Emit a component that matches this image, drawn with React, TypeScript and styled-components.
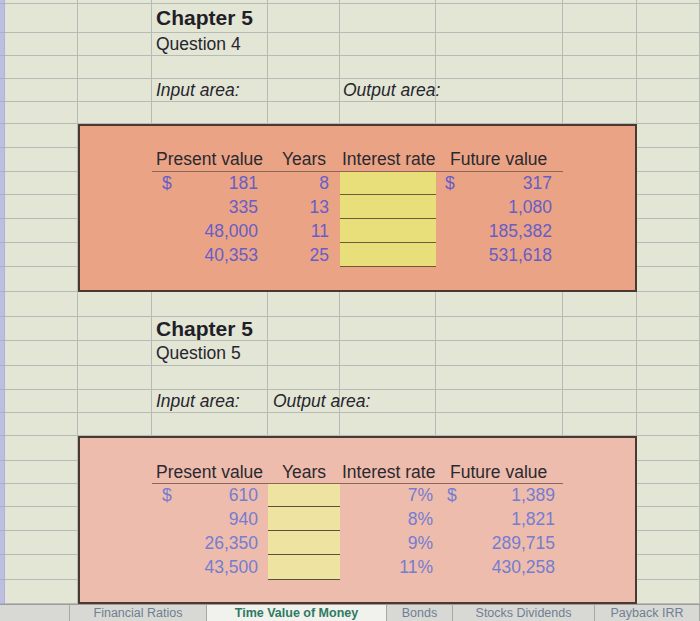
import React from "react";
import styled, { createGlobalStyle } from "styled-components";

const COLS = [5, 73, 74, 116, 72, 96, 127, 74, 63];
const ROWS = [4, 29, 23, 23, 23, 22, 24, 24, 23, 24, 24, 24, 25, 25, 24, 25, 24, 23, 23, 25, 23, 23, 24, 24, 25, 24];

const Global = createGlobalStyle`
  html, body { margin: 0; padding: 0; width: 700px; height: 621px; overflow: hidden; background: #e3e5d5; }
  body { font-family: "Liberation Sans", Arial, sans-serif; }
`;

const Page = styled.div`
  display: flex;
  flex-direction: column;
  width: 700px;
  height: 621px;
  overflow: hidden;
  background: #e3e5d5;
`;

const Sheet = styled.div`
  display: grid;
  grid-template-columns: ${COLS.map((c) => c + "px").join(" ")};
  grid-template-rows: ${ROWS.map((r) => r + "px").join(" ")};
  flex: none;
`;

const Cell = styled.div<{ $strip?: boolean }>`
  box-sizing: border-box;
  border-right: 1px solid ${(p) => (p.$strip ? "#b0b3d6" : "#b7bbb6")};
  border-bottom: 1px solid ${(p) => (p.$strip ? "#a9add2" : "#b7bbb6")};
  background: ${(p) => (p.$strip ? "#bcbfe0" : "transparent")};
  display: flex;
  align-items: center;
  white-space: nowrap;
  overflow: visible;
  min-width: 0;
  position: relative;
  z-index: 1;
`;

const Title = styled.span`
  font-weight: 700;
  font-size: 21px;
  color: #1f1f28;
  padding-left: 4px;
`;

const Label = styled.span<{ $italic?: boolean; $pad?: number }>`
  font-size: 17.5px;
  font-style: ${(p) => (p.$italic ? "italic" : "normal")};
  color: #26262e;
  padding-left: ${(p) => p.$pad ?? 4}px;
`;

const Box = styled.div<{ $row: number; $span: number; $tone: "a" | "b"; $rows: number[] }>`
  grid-column: 3 / 9;
  grid-row: ${(p) => p.$row} / span ${(p) => p.$span};
  box-sizing: border-box;
  border: 2px solid #4a3832;
  background: ${(p) => (p.$tone === "a" ? "#eba385" : "#eebcac")};
  display: grid;
  grid-template-columns: 72px 116px 72px 96px 127px 72px;
  grid-template-rows: ${(p) => p.$rows.map((r) => r + "px").join(" ")};
  font-size: 17.5px;
  position: relative;
  z-index: 2;
`;

const BoxCell = styled.div`
  box-sizing: border-box;
  min-width: 0;
`;

const HeadCell = styled.div<{ $pad?: number }>`
  box-sizing: border-box;
  border-bottom: 1px solid #8c6658;
  display: flex;
  align-items: center;
  white-space: nowrap;
  overflow: hidden;
  color: #2a2930;
  padding-left: ${(p) => p.$pad ?? 0}px;
  min-width: 0;
`;

const Acct = styled.div<{ $tone: "a" | "b"; $l: number; $r: number }>`
  box-sizing: border-box;
  display: flex;
  align-items: center;
  justify-content: space-between;
  padding: 0 ${(p) => p.$r}px 0 ${(p) => p.$l}px;
  color: ${(p) => (p.$tone === "a" ? "#665ec8" : "#747dd0")};
  white-space: nowrap;
`;

const Num = styled.div<{ $tone: "a" | "b"; $r: number }>`
  box-sizing: border-box;
  display: flex;
  align-items: center;
  justify-content: flex-end;
  padding-right: ${(p) => p.$r}px;
  color: ${(p) => (p.$tone === "a" ? "#665ec8" : "#747dd0")};
  white-space: nowrap;
`;

const InputCell = styled.div<{ $tone: "a" | "b" }>`
  box-sizing: border-box;
  background: ${(p) => (p.$tone === "a" ? "#e9df7a" : "#efe3a2")};
  border-bottom: 1px solid ${(p) => (p.$tone === "a" ? "#6e5a3a" : "#5a4e40")};
`;

const TabBar = styled.div`
  display: flex;
  align-items: stretch;
  flex: 1;
  background: #d8d9d5;
  border-top: 1px solid #9c9d99;
  font-family: "Liberation Sans", Arial, sans-serif;
  font-size: 12.5px;
  color: #6f8092;
`;

const Tab = styled.div<{ $active?: boolean; $w: number }>`
  box-sizing: border-box;
  width: ${(p) => p.$w}px;
  flex: none;
  display: flex;
  justify-content: center;
  align-items: center;
  line-height: 15px;
  white-space: nowrap;
  background: ${(p) => (p.$active ? "#f1f2ee" : "transparent")};
  color: ${(p) => (p.$active ? "#2f7a62" : "#6f8092")};
  font-weight: ${(p) => (p.$active ? 700 : 400)};
  border-right: 1px solid #a6a8a4;
`;

type Section = {
  row: number; // 1-based grid row where the box starts
  span: number;
  tone: "a" | "b";
  rows: number[];
};

const SECTIONS: Section[] = [
  { row: 7, span: 7, tone: "a", rows: [22, 24, 23, 24, 24, 24, 23] },
  { row: 20, span: 7, tone: "b", rows: [23, 23, 23, 24, 24, 25, 22] },
];

// text content of plain sheet cells keyed by "gridRow-gridCol"
const TEXTS: Record<string, React.ReactNode> = {
  "2-4": <Title>Chapter 5</Title>,
  "3-4": <Label>Question 4</Label>,
  "5-4": <Label $italic>Input area:</Label>,
  "5-6": <Label $italic $pad={3}>Output area:</Label>,
  "15-4": <Title>Chapter 5</Title>,
  "16-4": <Label>Question 5</Label>,
  "18-4": <Label $italic>Input area:</Label>,
  "18-5": <Label $italic $pad={5}>Output area:</Label>,
};

function inBox(r: number, c: number) {
  return SECTIONS.some((s) => r >= s.row && r < s.row + s.span && c >= 3 && c <= 8);
}

const Q4 = [
  { pv: "181", yrs: "8", fv: "317", first: true },
  { pv: "335", yrs: "13", fv: "1,080" },
  { pv: "48,000", yrs: "11", fv: "185,382" },
  { pv: "40,353", yrs: "25", fv: "531,618" },
];

const Q5 = [
  { pv: "610", rate: "7%", fv: "1,389", first: true },
  { pv: "940", rate: "8%", fv: "1,821" },
  { pv: "26,350", rate: "9%", fv: "289,715" },
  { pv: "43,500", rate: "11%", fv: "430,258" },
];

function EmptyRow() {
  return (
    <>
      {Array.from({ length: 6 }).map((_, i) => (
        <BoxCell key={i} />
      ))}
    </>
  );
}

function Header() {
  return (
    <>
      <BoxCell />
      <HeadCell $pad={4}>Present value</HeadCell>
      <HeadCell $pad={14}>Years</HeadCell>
      <HeadCell $pad={2}>Interest rate</HeadCell>
      <HeadCell $pad={14}>Future value</HeadCell>
      <BoxCell />
    </>
  );
}

function Box4() {
  const s = SECTIONS[0];
  return (
    <Box $row={s.row} $span={s.span} $tone="a" $rows={s.rows}>
      <EmptyRow />
      <Header />
      {Q4.map((d, i) => (
        <React.Fragment key={i}>
          <BoxCell />
          <Acct $tone="a" $l={10} $r={10}>
            <span>{d.first ? "$" : ""}</span>
            <span>{d.pv}</span>
          </Acct>
          <Num $tone="a" $r={11}>{d.yrs}</Num>
          <InputCell $tone="a" />
          <Acct $tone="a" $l={9} $r={11}>
            <span>{d.first ? "$" : ""}</span>
            <span>{d.fv}</span>
          </Acct>
          <BoxCell />
        </React.Fragment>
      ))}
      <EmptyRow />
    </Box>
  );
}

function Box5() {
  const s = SECTIONS[1];
  return (
    <Box $row={s.row} $span={s.span} $tone="b" $rows={s.rows}>
      <EmptyRow />
      <Header />
      {Q5.map((d, i) => (
        <React.Fragment key={i}>
          <BoxCell />
          <Acct $tone="b" $l={10} $r={10}>
            <span>{d.first ? "$" : ""}</span>
            <span>{d.pv}</span>
          </Acct>
          <InputCell $tone="b" />
          <Num $tone="b" $r={3}>{d.rate}</Num>
          <Acct $tone="b" $l={11} $r={8}>
            <span>{d.first ? "$" : ""}</span>
            <span>{d.fv}</span>
          </Acct>
          <BoxCell />
        </React.Fragment>
      ))}
      <EmptyRow />
    </Box>
  );
}

export default function App() {
  const cells: React.ReactNode[] = [];
  for (let r = 1; r <= ROWS.length; r++) {
    for (let c = 1; c <= COLS.length; c++) {
      if (inBox(r, c)) continue;
      cells.push(
        <Cell key={`${r}-${c}`} $strip={c === 1}>
          {TEXTS[`${r}-${c}`] ?? null}
        </Cell>
      );
    }
  }
  return (
    <>
      <Global />
      <Page>
        <Sheet>
          <Box4 />
          <Box5 />
          {cells}
        </Sheet>
        <TabBar>
          <Tab $w={70} />
          <Tab $w={137}>Financial Ratios</Tab>
          <Tab $w={180} $active>
            Time Value of Money
          </Tab>
          <Tab $w={66}>Bonds</Tab>
          <Tab $w={142}>Stocks Dividends</Tab>
          <Tab $w={105}>Payback IRR</Tab>
        </TabBar>
      </Page>
    </>
  );
}
